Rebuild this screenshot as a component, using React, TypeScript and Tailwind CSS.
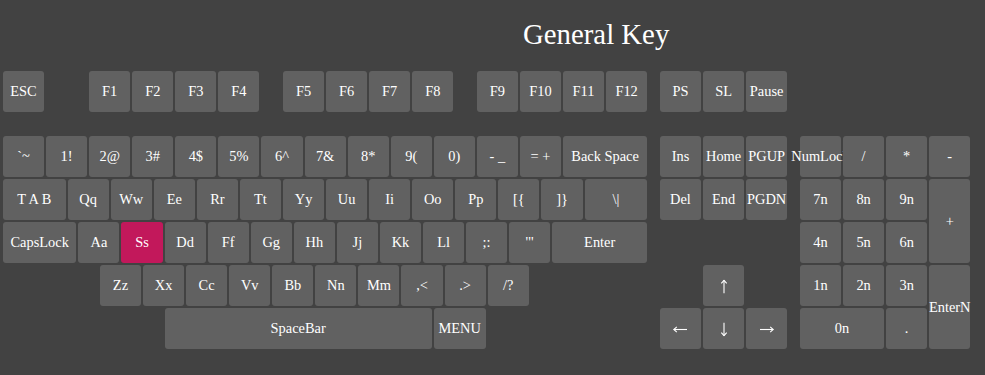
import React from "react";

const W: Record<string, string> = {
  "1": "w-[41.08px]",
  "1.25": "w-[51.85px]",
  "1.5": "w-[62.62px]",
  "1.75": "w-[73.39px]",
  "2": "w-[84.16px]",
  "2.25": "w-[94.93px]",
  "6.25": "w-[267.25px]",
};

function Key({ label, w = "1", hl = false }: { label: string; w?: string; hl?: boolean }) {
  return (
    <div
      className={`relative m-[1px] h-[41px] shrink-0 ${W[w]} rounded-[3px] ${
        hl ? "bg-[#c2185b]" : "bg-[#616161]"
      } flex items-center justify-center whitespace-nowrap text-[14.4px] leading-none`}
    >
      {label}
    </div>
  );
}

function GKey({ label, cls = "", children }: { label?: string; cls?: string; children?: React.ReactNode }) {
  return (
    <div
      className={`relative m-[1px] rounded-[3px] bg-[#616161] flex items-center justify-center whitespace-nowrap text-[14.4px] leading-none ${cls}`}
    >
      {children ?? label}
    </div>
  );
}

function Arrow({ dir }: { dir: "up" | "down" | "left" | "right" }) {
  const rot = { left: 0, up: 90, right: 180, down: 270 }[dir];
  return (
    <svg
      width="14"
      height="7"
      viewBox="0 0 14 7"
      className="mt-[2px]"
      style={{ transform: `rotate(${rot}deg)` }}
      fill="none"
      stroke="white"
      strokeWidth="1.1"
    >
      <line x1="0.8" y1="3.5" x2="14" y2="3.5" />
      <polyline points="3.8,0.8 0.8,3.5 3.8,6.2" />
    </svg>
  );
}

function Row({ keys }: { keys: (string | [string, string] | [string, string, boolean])[] }) {
  return (
    <div className="flex">
      {keys.map((k, i) =>
        typeof k === "string" ? (
          <Key key={i} label={k} />
        ) : (
          <Key key={i} label={k[0]} w={k[1]} hl={k[2] === true} />
        )
      )}
    </div>
  );
}

export default function App() {
  return (
    <div className="w-[985px] h-[375px] bg-[#424242] text-white font-['Liberation_Serif',serif] overflow-hidden">
      <div className="pt-[20px] pl-[523px] h-[49px] text-[28.8px] leading-[29px]">General Key</div>
      <div className="pl-[2px] mt-[21px]">
        {/* function row */}
        <div className="flex">
          <Key label="ESC" />
          <div className="w-[43.08px] shrink-0" />
          <Key label="F1" />
          <Key label="F2" />
          <Key label="F3" />
          <Key label="F4" />
          <div className="w-[21.54px] shrink-0" />
          <Key label="F5" />
          <Key label="F6" />
          <Key label="F7" />
          <Key label="F8" />
          <div className="w-[21.54px] shrink-0" />
          <Key label="F9" />
          <Key label="F10" />
          <Key label="F11" />
          <Key label="F12" />
          <div className="w-[10.77px] shrink-0" />
          <Key label="PS" />
          <Key label="SL" />
          <Key label="Pause" />
        </div>

        <div className="flex items-start mt-[22px]">
          {/* main block */}
          <div className="flex flex-col w-[646.2px] shrink-0">
            <Row keys={["`~", "1!", "2@", "3#", "4$", "5%", "6^", "7&", "8*", "9(", "0)", "- _", "= +", ["Back Space", "2"]]} />
            <Row keys={[["T A B", "1.5"], "Qq", "Ww", "Ee", "Rr", "Tt", "Yy", "Uu", "Ii", "Oo", "Pp", "[{", "]}", ["\\|", "1.5"]]} />
            <Row keys={[["CapsLock", "1.75"], "Aa", ["Ss", "1", true], "Dd", "Ff", "Gg", "Hh", "Jj", "Kk", "Ll", ";:", "'\"", ["Enter", "2.25"]]} />
            <div className="flex">
              <div className="w-[96.93px] shrink-0" />
              {["Zz", "Xx", "Cc", "Vv", "Bb", "Nn", "Mm", ",<", ".>", "/?"].map((k) => (
                <Key key={k} label={k} />
              ))}
            </div>
            <div className="flex">
              <div className="w-[161.55px] shrink-0" />
              <Key label="SpaceBar" w="6.25" />
              <Key label="MENU" w="1.25" />
            </div>
          </div>

          <div className="w-[10.77px] shrink-0" />

          {/* nav block */}
          <div className="grid grid-cols-[repeat(3,43.08px)] grid-rows-[repeat(5,43px)] shrink-0">
            <GKey label="Ins" />
            <GKey label="Home" />
            <GKey label="PGUP" />
            <GKey label="Del" />
            <GKey label="End" />
            <GKey label="PGDN" />
            <div className="col-span-3" />
            <GKey cls="col-start-2">
              <Arrow dir="up" />
            </GKey>
            <div />
            <GKey cls="col-start-1">
              <Arrow dir="left" />
            </GKey>
            <GKey>
              <Arrow dir="down" />
            </GKey>
            <GKey>
              <Arrow dir="right" />
            </GKey>
          </div>

          <div className="w-[10.77px] shrink-0" />

          {/* numpad */}
          <div className="grid grid-cols-[repeat(4,43.08px)] grid-rows-[repeat(5,43px)] shrink-0">
            <GKey label="NumLock" cls="col-start-1 row-start-1" />
            <GKey label="/" cls="col-start-2 row-start-1" />
            <GKey label="*" cls="col-start-3 row-start-1" />
            <GKey label="-" cls="col-start-4 row-start-1" />
            <GKey label="7n" cls="col-start-1 row-start-2" />
            <GKey label="8n" cls="col-start-2 row-start-2" />
            <GKey label="9n" cls="col-start-3 row-start-2" />
            <GKey label="+" cls="col-start-4 row-start-2 row-span-2" />
            <GKey label="4n" cls="col-start-1 row-start-3" />
            <GKey label="5n" cls="col-start-2 row-start-3" />
            <GKey label="6n" cls="col-start-3 row-start-3" />
            <GKey label="1n" cls="col-start-1 row-start-4" />
            <GKey label="2n" cls="col-start-2 row-start-4" />
            <GKey label="3n" cls="col-start-3 row-start-4" />
            <GKey label="EnterN" cls="col-start-4 row-start-4 row-span-2" />
            <GKey label="0n" cls="col-start-1 row-start-5 col-span-2" />
            <GKey label="." cls="col-start-3 row-start-5" />
          </div>
        </div>
      </div>
    </div>
  );
}
